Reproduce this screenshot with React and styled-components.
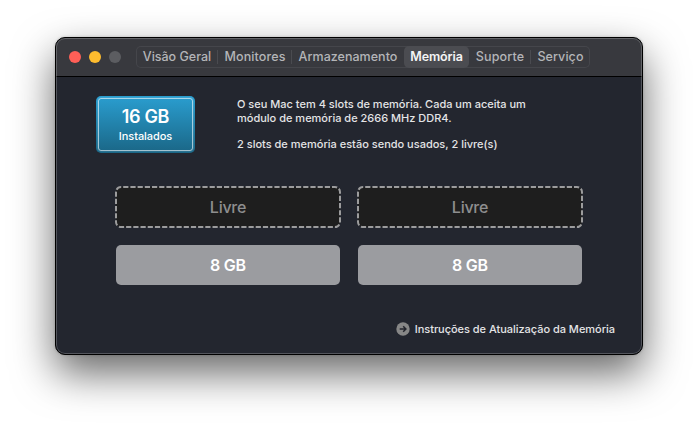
import React from 'react';
import styled, { createGlobalStyle } from 'styled-components';

const GlobalStyle = createGlobalStyle`
  * { box-sizing: border-box; }
  body {
    margin: 0;
    background: #fff;
    font-family: Inter, "Liberation Sans", sans-serif;
    overflow: hidden;
  }
`;

const Desktop = styled.div`
  width: 698px;
  height: 428px;
  padding: 37px 55px 0;
  overflow: hidden;
`;

const Window = styled.main`
  width: 588px;
  height: 318px;
  border: 1px solid #000;
  border-radius: 10px;
  background: #23262f;
  box-shadow: 0 18px 41px rgba(0, 0, 0, 0.6), 0 0 3px rgba(0, 0, 0, 0.2);
  overflow: hidden;
  display: flex;
  flex-direction: column;
  position: relative;

  &::after {
    content: '';
    position: absolute;
    inset: 0;
    border: 1px solid rgba(255, 255, 255, 0.22);
    border-radius: 9px;
    pointer-events: none;
  }
`;

const TitleBar = styled.header`
  height: 39px;
  flex: none;
  display: flex;
  align-items: center;
  padding-left: 13px;
  background: #38393e;
  border-bottom: 1px solid #000;
`;

const Lights = styled.div`
  display: flex;
  gap: 8px;
  width: 67px;
`;

const Light = styled.span`
  width: 12px;
  height: 12px;
  border-radius: 50%;
  background: ${(p) => p.$color};
`;

const Tabs = styled.nav`
  display: flex;
  height: 22px;
  border-radius: 5px;
  box-shadow: inset 0 0 0 1px #45464b;
`;

const Tab = styled.button`
  width: ${(p) => p.$width}px;
  height: 22px;
  padding: 0;
  border: 0;
  border-radius: ${(p) => (p.$active ? '5px' : 0)};
  background: ${(p) => (p.$active ? '#4b4c51' : 'transparent')};
  color: ${(p) => (p.$active ? '#f4f4f5' : '#b4b5b8')};
  font: ${(p) => (p.$active ? 600 : 450)} 12.5px/21px Inter, sans-serif;
  letter-spacing: ${(p) => p.$spacing}px;
  white-space: nowrap;
  display: flex;
  justify-content: center;
  align-items: flex-start;
  position: relative;

  &::after {
    content: '';
    display: ${(p) => (p.$divided ? 'block' : 'none')};
    position: absolute;
    right: 0;
    top: 4px;
    width: 1px;
    height: 14px;
    background: #4a4b50;
  }
`;

const Content = styled.section`
  flex: 1;
  padding: 19px 27px 0 40px;
`;

const Summary = styled.div`
  display: flex;
  height: 57px;
`;

const Total = styled.div`
  width: 99px;
  height: 57px;
  margin-right: 42px;
  padding: 2px;
  border-radius: 5px;
  background: linear-gradient(#2a9ed0, #1a6686);
`;

const TotalFrame = styled.div`
  height: 53px;
  border: 1px solid rgba(255, 255, 255, 0.6);
  outline: 1px solid rgba(255, 255, 255, 0.08);
  border-radius: 3px;
  display: flex;
  flex-direction: column;
  align-items: center;
  color: #fff;
`;

const TotalSize = styled.strong`
  margin-top: 7px;
  font-size: 18px;
  line-height: 22px;
  font-weight: 600;
  letter-spacing: -0.35px;
`;

const TotalLabel = styled.span`
  margin-top: 1px;
  font-size: 11px;
  line-height: 14px;
  font-weight: 500;
  letter-spacing: -0.05px;
`;

const Description = styled.div`
  padding-top: 1px;
  color: #e4e4e6;
  font-size: 11px;
  line-height: 14px;
  font-weight: 500;
  white-space: nowrap;
`;

const Line = styled.p`
  margin: 0 0 ${(p) => p.$gap || 0}px;
`;

const Slots = styled.div`
  display: grid;
  grid-template-columns: 226px 226px;
  gap: 16px;
  margin: 33px 0 0 19px;
`;

const Slot = styled.div`
  height: 42px;
  display: grid;
  place-items: center;
  font-size: 16px;
  line-height: 20px;
  letter-spacing: -0.25px;

  > * { grid-area: 1 / 1; }
`;

const EmptySlot = styled(Slot)`
  color: #8e8e8f;
  font-weight: 500;
`;

const FilledSlot = styled(Slot)`
  height: 40px;
  margin: 1px;
  border-radius: 5px;
  background: #9b9ca0;
  color: #fff;
  font-weight: 600;
`;

const Footer = styled.footer`
  display: flex;
  justify-content: flex-end;
  align-items: center;
  gap: 5px;
  height: 14px;
  margin-top: 36px;
  color: #e4e4e6;
  font-size: 11px;
  font-weight: 500;
  line-height: 14px;
  letter-spacing: -0.03px;
  white-space: nowrap;
`;

const Outline = () => (
  <svg width="226" height="42" viewBox="0 0 226 42">
    <rect x="1" y="1" width="224" height="40" rx="5" fill="#1e1e1e" stroke="#9c9c9d" strokeWidth="2" strokeDasharray="5.2 2" strokeDashoffset="5" />
  </svg>
);

const ArrowIcon = () => (
  <svg width="14" height="14" viewBox="0 0 14 14">
    <circle cx="7" cy="7" r="6.7" fill="#878787" />
    <path d="M3.7 7h6M7.2 4.3 9.9 7 7.2 9.7" fill="none" stroke="#24262e" strokeWidth="1.5" />
  </svg>
);

const TABS = [
  { name: 'Visão Geral', width: 82, spacing: 0, divided: true },
  { name: 'Monitores', width: 74, spacing: 0.12, divided: true },
  { name: 'Armazenamento', width: 112, spacing: 0.03 },
  { name: 'Memória', width: 65, spacing: -0.12, active: true },
  { name: 'Suporte', width: 62, spacing: 0.18, divided: true },
  { name: 'Serviço', width: 59, spacing: 0.08 },
];

export default function App() {
  return (
    <Desktop>
      <GlobalStyle />
      <Window>
        <TitleBar>
          <Lights>
            <Light $color="#ff5f57" />
            <Light $color="#febc2e" />
            <Light $color="#5c5d61" />
          </Lights>
          <Tabs>
            {TABS.map((t) => (
              <Tab key={t.name} $width={t.width} $spacing={t.spacing} $active={t.active} $divided={t.divided}>
                {t.name}
              </Tab>
            ))}
          </Tabs>
        </TitleBar>
        <Content>
          <Summary>
            <Total>
              <TotalFrame>
                <TotalSize>16 GB</TotalSize>
                <TotalLabel>Instalados</TotalLabel>
              </TotalFrame>
            </Total>
            <Description>
              <Line>O seu Mac tem 4 slots de memória. Cada um aceita um</Line>
              <Line $gap={12}>módulo de memória de 2666 MHz DDR4.</Line>
              <Line>2 slots de memória estão sendo usados, 2 livre(s)</Line>
            </Description>
          </Summary>
          <Slots>
            <EmptySlot><Outline /><span>Livre</span></EmptySlot>
            <EmptySlot><Outline /><span>Livre</span></EmptySlot>
            <FilledSlot>8 GB</FilledSlot>
            <FilledSlot>8 GB</FilledSlot>
          </Slots>
          <Footer>
            <ArrowIcon />
            <span>Instruções de Atualização da Memória</span>
          </Footer>
        </Content>
      </Window>
    </Desktop>
  );
}
